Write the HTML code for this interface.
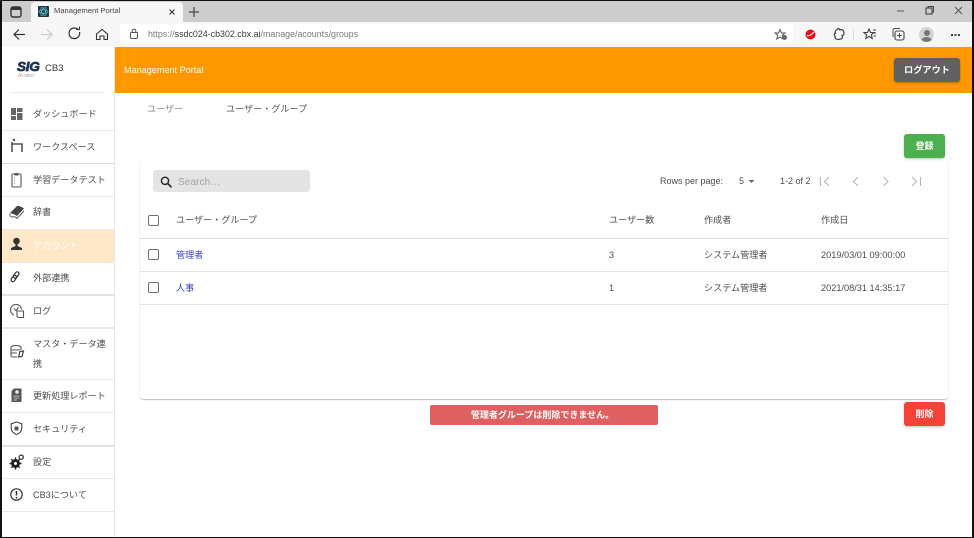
<!DOCTYPE html>
<html lang="ja"><head><meta charset="utf-8"><title>Management Portal</title>
<style>
html,body{margin:0;padding:0;background:#fff}
body{width:974px;height:538px;position:relative;overflow:hidden;font-family:"Liberation Sans","Noto Sans CJK JP",sans-serif;color:#444}
.a{position:absolute}
.t{position:absolute;white-space:nowrap;line-height:14px}
.sep{position:absolute;left:2px;width:112px;height:1px;background:#e9e9e9}
.nav{position:absolute;left:33px;font-size:9.100px;line-height:14px;color:#4d4d4d;white-space:nowrap}
.ni{position:absolute;left:9px;width:16px;height:16px}
.hl{position:absolute;height:1px;background:#e4e4e4}
.cb{position:absolute;left:147.500px;width:9px;height:9px;border:1.500px solid #6f6f6f;border-radius:2px}
svg{display:block;overflow:visible}
</style></head><body>

<!-- tab strip -->
<div class="a" style="left:0;top:0;width:974px;height:22px;background:#cdcdcd"></div>
<div class="a" style="left:31px;top:2px;width:152px;height:20px;background:#f7f7f7;border-radius:4px 4px 0 0"></div>
<svg class="a" style="left:10px;top:6px" width="13" height="12"><rect x="1" y="1" width="10" height="10" rx="2" fill="none" stroke="#333" stroke-width="1.400"/><rect x="1" y="1" width="10" height="3" fill="#333"/></svg>
<div class="a" style="left:38px;top:6px;width:11px;height:11px;background:#20343c;border-radius:1px"></div>
<svg class="a" style="left:38px;top:6px" width="11" height="11"><g fill="none" stroke="#52b7c9" stroke-width=".8"><ellipse cx="5.500" cy="5.500" rx="4.500" ry="1.800"/><ellipse cx="5.500" cy="5.500" rx="4.500" ry="1.800" transform="rotate(60 5.500 5.500)"/><ellipse cx="5.500" cy="5.500" rx="4.500" ry="1.800" transform="rotate(120 5.500 5.500)"/></g></svg>
<div class="t" style="left:54px;top:4px;font-size:7.600px;color:#444">Management Portal</div>
<svg class="a" style="left:168px;top:8px" width="8" height="8"><path d="M1.500 1.500L6.500 6.500M6.500 1.500L1.500 6.500" stroke="#333" stroke-width="1.100"/></svg>
<svg class="a" style="left:188px;top:6px" width="12" height="12"><path d="M6 1V11M1 6H11" stroke="#444" stroke-width="1.200"/></svg>
<svg class="a" style="left:896px;top:5px" width="70" height="12"><path d="M1 6H8" stroke="#555" stroke-width="1"/><rect x="30" y="3" width="6" height="6" fill="none" stroke="#444" stroke-width="1.100"/><path d="M32 3V1.500H37.500V7H36" fill="none" stroke="#444" stroke-width="1"/><path d="M59 2L66 9M66 2L59 9" stroke="#555" stroke-width="1"/></svg>

<!-- toolbar -->
<div class="a" style="left:0;top:22px;width:974px;height:25px;background:#f7f7f7"></div>
<div class="a" style="left:120px;top:24px;width:673px;height:20px;background:#fff;border-radius:3px"></div>
<svg class="a" style="left:12px;top:27px" width="100" height="15">
<path d="M2 7.500H13M7 2.500L2 7.500L7 12.500" fill="none" stroke="#333" stroke-width="1.200"/>
<path d="M29 7.500H40M35 2.500L40 7.500L35 12.500" fill="none" stroke="#ccc" stroke-width="1.200"/>
<path d="M66.500 3A5.300 5.300 0 1 0 67.500 5" fill="none" stroke="#333" stroke-width="1.200"/><path d="M64 2.500H67.500V-.5" fill="none" stroke="#333" stroke-width="1"/>
<path d="M84.500 7L90 2.500L95.500 7V12.500H92V9H88V12.500H84.500Z" fill="none" stroke="#333" stroke-width="1.100"/>
</svg>
<svg class="a" style="left:129px;top:28px" width="10" height="12"><rect x="1.500" y="4.500" width="7" height="6" rx="1" fill="none" stroke="#555"/><path d="M3.200 4.500V3A1.800 1.800 0 0 1 6.800 3V4.500" fill="none" stroke="#555"/></svg>
<div class="t" style="left:148px;top:27px;font-size:8.900px;color:#7a7a7a">https://<span style="color:#3a3a3a">ssdc024-cb302.cbx.ai</span>/manage/acounts/groups</div>
<svg class="a" style="left:774px;top:28px" width="15" height="13"><path d="M6 1.500L7.500 5H11L8.300 7.300L9.200 11L6 9L2.800 11L3.700 7.300L1 5H4.500Z" fill="none" stroke="#555"/><circle cx="10.500" cy="9.500" r="2.500" fill="#666"/></svg>
<svg class="a" style="left:804px;top:28px" width="14" height="13"><circle cx="6.500" cy="6.500" r="5" fill="#e60f1c"/><path d="M3 7.500C6 8.500 8 6 10 4" stroke="#fff" stroke-width="1" fill="none"/></svg>
<svg class="a" style="left:832px;top:27px" width="14" height="14"><path d="M5 2.500C6 1 8 1.500 8 3C10 2 12 3.500 12 6C12 8 11 8.500 10 8.500C11.500 11 9 12.500 6.500 12.500C4 12.500 2.500 11 3 9C2 8 2 6 3.500 6C2.500 4.500 4 3 5 2.500Z" fill="none" stroke="#444" stroke-width="1.200"/></svg>
<div class="a" style="left:853px;top:29px;width:1px;height:11px;background:#dcdcdc"></div>
<svg class="a" style="left:863px;top:27px" width="14" height="14"><path d="M6 2L7.500 5.500H11L8.300 7.800L9.200 11.500L6 9.500L2.800 11.500L3.700 7.800L1 5.500H4.500Z" fill="none" stroke="#444" stroke-width="1.100"/><path d="M10 3H13M11 6H13M10.500 9H13" stroke="#444"/></svg>
<svg class="a" style="left:891px;top:27px" width="14" height="14"><rect x="4" y="4" width="9" height="9" rx="2" fill="none" stroke="#444" stroke-width="1.100"/><path d="M8.500 6.200V10.800M6.200 8.500H10.800M2 10V3.500A2 2 0 0 1 4 1.500H9" fill="none" stroke="#444"/></svg>
<div class="a" style="left:919px;top:27px;width:15px;height:15px;border-radius:50%;background:#d4d4d4;overflow:hidden">
<div class="a" style="left:4.500px;top:2.500px;width:6px;height:6px;border-radius:50%;background:#777"></div>
<div class="a" style="left:2px;top:9.500px;width:11px;height:8px;border-radius:50%;background:#777"></div></div>
<div class="a" style="left:951px;top:34px;width:2px;height:2px;background:#444;box-shadow:3.500px 0 #444,7px 0 #444"></div>

<!-- sidebar -->
<div class="a" style="left:114px;top:47px;width:1px;height:491px;background:#e6e6e6"></div>
<div class="a" style="left:17px;top:61px;font:italic bold 13px/12px 'Liberation Sans',sans-serif;color:#1c3257;letter-spacing:-.2px;-webkit-text-stroke:.7px #1c3257;transform:scaleX(1.040);transform-origin:left">SIG</div>
<div class="t" style="left:18px;top:73px;font-size:5px;line-height:7px;color:#9aa6b8"><span style="color:#e58f80">AI</span>-labo</div>
<div class="t" style="left:45px;top:62px;font-size:9.500px;color:#333">CB3</div>
<div class="a" style="left:11px;top:92px;width:94px;height:1px;background:#e9e9e9"></div>

<div class="a" style="left:2px;top:229px;width:112px;height:33px;background:#ffe8c8"></div>
<div class="sep" style="top:130px"></div><div class="sep" style="top:163px;background:#ddd"></div><div class="sep" style="top:196px"></div><div class="sep" style="top:229px"></div><div class="sep" style="top:262px"></div><div class="sep" style="top:294px;height:2px;background:#e3e3e3"></div><div class="sep" style="top:327px;height:2px;background:#e9e9e9"></div><div class="sep" style="top:379px"></div><div class="sep" style="top:412px"></div><div class="sep" style="top:445px;height:2px;background:#e3e3e3"></div><div class="sep" style="top:478px"></div><div class="sep" style="top:511px"></div>

<svg class="ni" style="top:106px" viewBox="0 0 16 16"><path d="M2 2H7V9H2ZM8 2H13.500V6H8ZM8 7H13.500V14H8ZM2 10H7V14H2Z" fill="#666"/></svg>
<div class="nav" style="top:107px">ダッシュボード</div>
<svg class="ni" style="top:138px" viewBox="0 0 16 16"><circle cx="5" cy="2" r="1.200" fill="#555"/><path d="M3 14V6H13V14M3 6V4" fill="none" stroke="#555" stroke-width="1.600"/></svg>
<div class="nav" style="top:140px">ワークスペース</div>
<svg class="ni" style="top:172px" viewBox="0 0 16 16"><rect x="3" y="2" width="9" height="13" rx="1" fill="none" stroke="#555" stroke-width="1.100"/><rect x="5.500" y="1" width="4" height="2.500" fill="#555"/><path d="M5 6H6M5 8.500H6M5 11H6" stroke="#888"/></svg>
<div class="nav" style="top:172.500px">学習データテスト</div>
<svg class="ni" style="top:204px" viewBox="0 0 16 16"><path d="M1 9L8 2C10 1.500 13 3 15 4.500L8 12C6 10.500 3 9.500 1 9Z" fill="#444"/><path d="M1 9.500C.5 11.500 1.500 13 3 13C5 12.500 7 13 8 14.500L15 7" fill="none" stroke="#555"/></svg>
<div class="nav" style="top:205px">辞書</div>
<svg class="ni" style="top:236px" viewBox="0 0 16 16"><circle cx="7.500" cy="5" r="3.300" fill="#333"/><path d="M6.500 8H8.500V10L13 12V14H2V12L6.500 10Z" fill="#333"/></svg>
<div class="nav" style="top:238.500px;color:#fff">アカウント</div>
<svg class="ni" style="top:269px" viewBox="0 0 16 16"><g fill="none" stroke="#333" stroke-width="1.200"><rect x="3" y="6" width="3.600" height="7" rx="1.800" transform="rotate(35 4.800 9.500)"/><rect x="5.400" y="2.500" width="3.600" height="7" rx="1.800" transform="rotate(35 7.200 6)"/></g></svg>
<div class="nav" style="top:270.500px">外部連携</div>
<svg class="ni" style="top:303px" viewBox="0 0 16 16"><g fill="none" stroke="#555" stroke-width="1.100"><path d="M5 12A5.500 5.500 0 1 1 12.500 6.500"/><path d="M5 5.500L7 7.500L9.500 4.500"/><path d="M8 8H14.500V14.500H9L8 13.500Z" fill="#fff"/></g></svg>
<div class="nav" style="top:304px">ログ</div>
<svg class="ni" style="top:343px" viewBox="0 0 16 16"><g fill="none" stroke="#555" stroke-width="1.100"><path d="M2 4.500C2 3 5 2.500 7 2.500C9 2.500 12 3 12 4.500V7M2 4.500V13C2 13.500 3 14 4 14H8"/><path d="M2 7H11M2 10H8" stroke-width="1"/></g><path d="M14.500 8L11 8.500L9.500 14L13 13.500Z" fill="none" stroke="#444" stroke-width="1.200"/></svg>
<div class="nav" style="top:337px">マスタ・データ連</div>
<div class="nav" style="top:357px">携</div>
<svg class="ni" style="top:387px" viewBox="0 0 16 16"><path d="M5 1.500H12.500V15H2.500V4Z" fill="#555"/><path d="M4.500 9H10.500M4.500 11H10.500M4.500 13H8" stroke="#ddd" stroke-width=".8"/><circle cx="8" cy="5" r="1.800" fill="#eee"/></svg>
<div class="nav" style="top:389px">更新処理レポート</div>
<svg class="ni" style="top:420px" viewBox="0 0 16 16"><path d="M7.500 2L12.800 3.800V8C12.800 11 10.300 13.500 7.500 14.500C4.700 13.500 2.200 11 2.200 8V3.800Z" fill="none" stroke="#444" stroke-width="1.100"/><rect x="5.500" y="6.500" width="4" height="4" rx=".7" fill="#555"/></svg>
<div class="nav" style="top:421.500px">セキュリティ</div>
<svg class="ni" style="top:454px" viewBox="0 0 16 16"><circle cx="6.500" cy="9.500" r="3" fill="none" stroke="#222" stroke-width="3"/><path d="M6.500 3.500V15.500M.5 9.500H12.500M2.300 5.300L10.700 13.700M10.700 5.300L2.300 13.700" stroke="#222" stroke-width="1.400"/><circle cx="6.500" cy="9.500" r="1.500" fill="#fff"/><circle cx="12.200" cy="3.200" r="2.100" fill="none" stroke="#444" stroke-width="1.400"/></svg>
<div class="nav" style="top:455px">設定</div>
<svg class="ni" style="top:487px" viewBox="0 0 16 16"><circle cx="7.500" cy="7.500" r="5.700" fill="none" stroke="#333" stroke-width="1.200"/><path d="M7.500 4V8.500" stroke="#333" stroke-width="1.500"/><circle cx="7.500" cy="10.700" r=".9" fill="#333"/></svg>
<div class="nav" style="top:488px">CB3について</div>

<!-- header -->
<div class="a" style="left:115px;top:47px;width:857px;height:46px;background:#ff9800"></div>
<div class="t" style="left:124px;top:63px;font-size:9.100px;color:#fff">Management Portal</div>
<div class="a" style="left:894px;top:58px;width:66px;height:24px;background:#616161;border-radius:3px;box-shadow:0 1px 2px rgba(0,0,0,.3);color:#fff;font-size:9.200px;font-weight:bold;text-align:center;line-height:25px">ログアウト</div>

<!-- tabs -->
<div class="t" style="left:147px;top:102px;font-size:9.100px;color:#8a8a8a">ユーザー</div>
<div class="t" style="left:226px;top:102px;font-size:9.100px;color:#555">ユーザー・グループ</div>

<!-- register -->
<div class="a" style="left:904px;top:134px;width:41px;height:24px;background:#4caf50;border-radius:3px;box-shadow:0 1px 2px rgba(0,0,0,.25);color:#fff;font-size:9px;font-weight:bold;text-align:center;line-height:24px">登録</div>

<!-- card -->
<div class="a" style="left:140px;top:161px;width:808px;height:238px;background:#fff;border-radius:3px;box-shadow:0 1px 1px rgba(0,0,0,.25),0 0 1px rgba(0,0,0,.04)"></div>
<div class="a" style="left:153px;top:170px;width:157px;height:22px;background:#e4e4e4;border-radius:3px"></div>
<svg class="a" style="left:160px;top:176px" width="13" height="13"><circle cx="5" cy="4.800" r="3.600" fill="none" stroke="#222" stroke-width="1.400"/><path d="M7.800 7.600L11.500 11.300" stroke="#222" stroke-width="1.600"/></svg>
<div class="t" style="left:178px;top:175.500px;font-size:10.200px;color:#a3a3a3">Search…</div>

<div class="t" style="left:660px;top:174px;font-size:9px;color:#4d4d4d">Rows per page:</div>
<div class="t" style="left:739px;top:174px;font-size:9px;color:#4d4d4d">5</div>
<svg class="a" style="left:748px;top:180px" width="7" height="4"><path d="M.5 0H6.500L3.500 3Z" fill="#666"/></svg>
<div class="t" style="left:780px;top:174px;font-size:9px;color:#4d4d4d">1-2 of 2</div>
<svg class="a" style="left:818px;top:175px" width="106" height="13"><g fill="none" stroke="#b5b5b5" stroke-width="1.100"><path d="M2.500 2V11M11 2L6.500 6.500L11 11"/><path d="M40 2L35.500 6.500L40 11"/><path d="M65.500 2L70 6.500L65.500 11"/><path d="M94 2L98.500 6.500L94 11M102.500 2V11"/></g></svg>

<!-- table -->
<div class="cb" style="top:214.500px"></div>
<div class="t" style="left:176px;top:213px;font-size:9.100px;color:#4d4d4d">ユーザー・グループ</div>
<div class="t" style="left:609px;top:213px;font-size:9.100px;color:#4d4d4d">ユーザー数</div>
<div class="t" style="left:704px;top:213px;font-size:9.100px;color:#4d4d4d">作成者</div>
<div class="t" style="left:821px;top:213px;font-size:9.100px;color:#4d4d4d">作成日</div>
<div class="hl" style="left:140px;top:238px;width:808px;height:1px;background:#dcdcdc"></div>

<div class="cb" style="top:249px"></div>
<div class="t" style="left:176px;top:248px;font-size:9.100px;color:#3f3fd0">管理者</div>
<div class="t" style="left:609px;top:248px;font-size:9.100px;color:#4d4d4d">3</div>
<div class="t" style="left:704px;top:248px;font-size:9.100px;color:#4d4d4d">システム管理者</div>
<div class="t" style="left:821px;top:248px;font-size:9.200px;color:#4d4d4d">2019/03/01 09:00:00</div>
<div class="hl" style="left:140px;top:271px;width:808px"></div>

<div class="cb" style="top:282px"></div>
<div class="t" style="left:176px;top:281px;font-size:9.100px;color:#3f3fd0">人事</div>
<div class="t" style="left:609px;top:281px;font-size:9.100px;color:#4d4d4d">1</div>
<div class="t" style="left:704px;top:281px;font-size:9.100px;color:#4d4d4d">システム管理者</div>
<div class="t" style="left:821px;top:281px;font-size:9.200px;color:#4d4d4d">2021/08/31 14:35:17</div>
<div class="hl" style="left:140px;top:304px;width:808px"></div>

<!-- alert + delete -->
<div class="a" style="left:430px;top:405px;width:228px;height:20px;background:#de6060;border-radius:2px;color:#fff;font-size:9px;font-weight:bold;text-align:center;line-height:20px;text-indent:-3px">管理者グループは削除できません。</div>
<div class="a" style="left:904px;top:402px;width:41px;height:24px;background:#f44336;border-radius:3px;box-shadow:0 1px 2px rgba(0,0,0,.25);color:#fff;font-size:9px;font-weight:bold;text-align:center;line-height:24px">削除</div>

<!-- screenshot frame -->
<div class="a" style="left:0;top:0;width:974px;height:1px;background:#111"></div>
<div class="a" style="left:0;top:0;width:2px;height:538px;background:#111"></div>
<div class="a" style="left:972px;top:0;width:2px;height:538px;background:#111"></div>
<div class="a" style="left:0;top:537px;width:974px;height:1px;background:#111"></div>
</body></html>
